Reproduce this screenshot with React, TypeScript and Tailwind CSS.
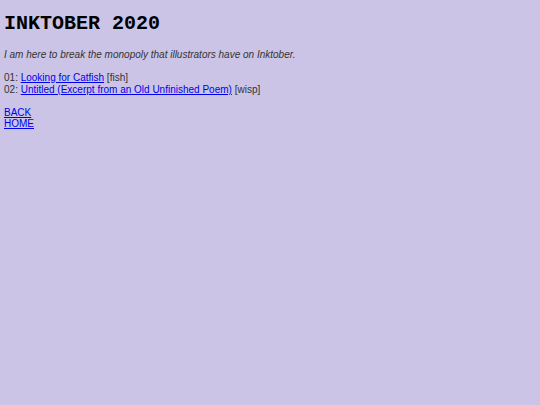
export default function App() {
  const entries = [
    { num: '01', title: 'Looking for Catfish', tag: 'fish' },
    { num: '02', title: 'Untitled (Excerpt from an Old Unfinished Poem)', tag: 'wisp' },
  ]

  return (
    <div className="min-h-[405px] bg-[#cbc4e6] px-[4px] pt-[13px] text-[10px] leading-[11.5px] text-[#333333] font-['Liberation_Sans',Arial,sans-serif]">
      <h1 className="text-[20px] leading-[22px] font-bold text-black font-['Liberation_Mono','Courier_New',monospace]">INKTOBER 2020</h1>
      <p className="mt-[14px] italic">I am here to break the monopoly that illustrators have on Inktober.</p>
      <div className="mt-[11.5px]">
        {entries.map(e => (
          <div key={e.num}>
            {e.num}: <a href="#" className="text-[#0000ee] underline">{e.title}</a> [{e.tag}]
          </div>
        ))}
      </div>
      <div className="mt-[11.5px] flex flex-col">
        <a href="#" className="text-[#0000ee] underline">BACK</a>
        <a href="#" className="text-[#0000ee] underline">HOME</a>
      </div>
    </div>
  )
}
